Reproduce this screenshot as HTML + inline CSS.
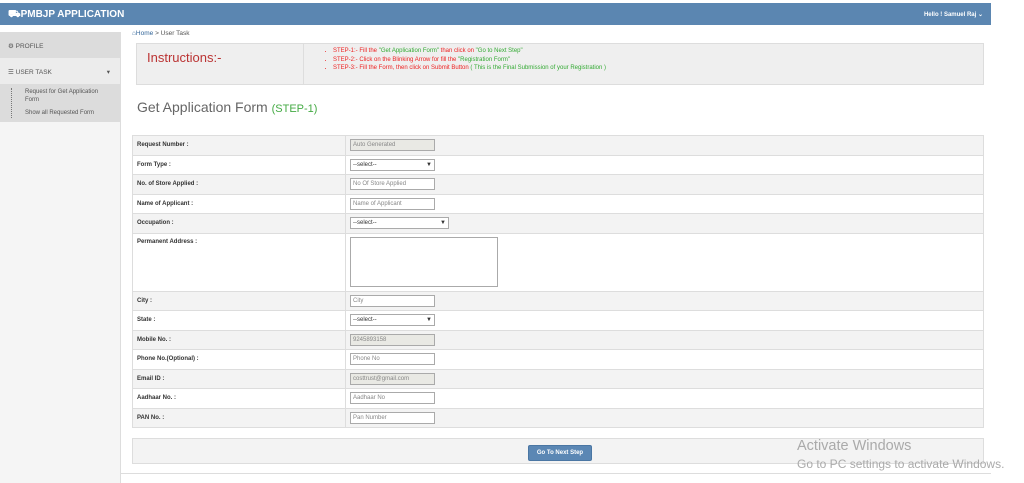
<!DOCTYPE html>
<html><head><style>
*{box-sizing:border-box;margin:0;padding:0}
body{width:1024px;height:483px;background:#fff;font-family:"Liberation Sans",sans-serif;position:relative;overflow:hidden;font-size:7px;color:#333}
.top{position:absolute;left:0;top:3px;width:991px;height:22px;background:#5b86b1;color:#fff}
.top .logo{position:absolute;left:8px;top:6px;font-weight:bold;font-size:10px}
.top .u{position:absolute;right:8px;top:8px;font-size:6px;font-weight:bold}
.side{position:absolute;left:0;top:32px;width:121px;height:451px;background:#f5f5f5;border-right:1px solid #ddd}
.p{height:26px;background:#dcdcdc;color:#555;padding:10px 0 0 8px;font-size:6.5px}
.ut{height:26px;background:#ececec;padding:10px 0 0 8px;font-size:6.5px;color:#555;position:relative}
.sub{background:#dcdcdc;height:38px;padding:4px 0 0 25px;font-size:6px;color:#555;line-height:8px;position:relative}
.sub:before{content:"";position:absolute;left:11px;top:4px;height:30px;border-left:1px dotted #777}
.bc{position:absolute;left:132px;top:30px;font-size:6.5px;color:#555}
.ins{position:absolute;left:136px;top:43px;width:848px;height:42px;background:#efefef;border:1px solid #ddd}
.ins .t{position:absolute;left:10px;top:6px;font-size:13px;color:#b33}
.ins .sep{position:absolute;left:166px;top:0;height:40px;border-left:1px solid #ddd}
.ins ul{position:absolute;left:188px;top:3px;font-size:6px;color:#e22;line-height:8.5px;list-style:disc;padding-left:0}
.ins li{margin-left:0;list-style-position:inside}
.g{color:#3a3}
h2{position:absolute;left:137px;top:99px;font-weight:normal;font-size:14px;color:#666}
h2 span{color:#4a4;font-size:11px}
table{position:absolute;left:132px;top:135px;width:852px;border-collapse:collapse}
td{border:1px solid #ddd;height:19.5px;font-size:6px;font-weight:bold;padding:0 4px;vertical-align:middle}
td.l{width:213px}
tr:nth-child(odd){background:#f3f3f3}
.in{display:inline-block;width:85px;height:12px;border:1px solid #aaa;background:#fff;font-size:6px;font-weight:normal;color:#888;padding:2px;vertical-align:middle}
.dis{background:#e9e9e4}
.sel{color:#333}
.sel b{float:right;font-size:6px}
.btnp{position:absolute;left:132px;top:438px;width:852px;height:26px;background:#f3f3f3;border:1px solid #ddd}
.btn{position:absolute;left:395px;top:6px;width:64px;height:16px;background:#5b87b4;border:1px solid #4a76a3;border-radius:2px;color:#fff;font-size:6px;font-weight:bold;text-align:center;line-height:14px}
.aw{position:absolute;left:797px;top:438px;color:#aaa;font-size:14.5px}
.aw2{position:absolute;left:797px;top:457px;color:#aaa;font-size:12px}
.bl{position:absolute;left:121px;top:473px;width:870px;border-top:1px solid #ddd}
</style></head><body>
<div class="top"><div class="logo">&#9951;PMBJP APPLICATION</div><div class="u">Hello ! Samuel Raj ⌄</div></div>
<div class="side">
<div class="p">&#9881; PROFILE</div>
<div class="ut">&#9776; USER TASK<span style="position:absolute;right:10px;top:10px">▾</span></div>
<div class="sub">Request for Get Application<br>Form<div style="margin-top:5px">Show all Requested Form</div></div>
</div>
<div class="bc"><span style="color:#369">&#8962;Home</span> &gt; User Task</div>
<div class="ins"><div class="t">Instructions:-</div><div class="sep"></div>
<ul>
<li>STEP-1:- Fill the <span class="g">"Get Application Form"</span> than click on <span class="g">"Go to Next Step"</span></li>
<li>STEP-2:- Click on the Blinking Arrow for fill the <span class="g">"Registration Form"</span></li>
<li>STEP-3:- Fill the Form, then click on Submit Button <span class="g">( This is the Final Submission of your Registration )</span></li>
</ul></div>
<h2>Get Application Form <span>(STEP-1)</span></h2>
<table>
<tr><td class="l">Request Number :</td><td><span class="in dis">Auto Generated</span></td></tr>
<tr><td class="l">Form Type :</td><td><span class="in sel">--select-- <b>▼</b></span></td></tr>
<tr><td class="l">No. of Store Applied :</td><td><span class="in">No Of Store Applied</span></td></tr>
<tr><td class="l">Name of Applicant :</td><td><span class="in">Name of Applicant</span></td></tr>
<tr><td class="l">Occupation :</td><td><span class="in sel" style="width:99px">--select-- <b>▼</b></span></td></tr>
<tr><td class="l" style="height:58px;vertical-align:top;padding-top:5px">Permanent Address :</td><td><span class="in" style="width:148px;height:50px"></span></td></tr>
<tr><td class="l">City :</td><td><span class="in">City</span></td></tr>
<tr><td class="l">State :</td><td><span class="in sel">--select-- <b>▼</b></span></td></tr>
<tr><td class="l">Mobile No. :</td><td><span class="in dis">9245893158</span></td></tr>
<tr><td class="l">Phone No.(Optional) :</td><td><span class="in">Phone No</span></td></tr>
<tr><td class="l">Email ID :</td><td><span class="in dis">costtrust@gmail.com</span></td></tr>
<tr><td class="l">Aadhaar No. :</td><td><span class="in">Aadhaar No</span></td></tr>
<tr><td class="l">PAN No. :</td><td><span class="in">Pan Number</span></td></tr>
</table>
<div class="btnp"><div class="btn">Go To Next Step</div></div>
<div class="aw">Activate Windows</div>
<div class="aw2">Go to PC settings to activate Windows.</div>
<div class="bl"></div>
</body></html>
